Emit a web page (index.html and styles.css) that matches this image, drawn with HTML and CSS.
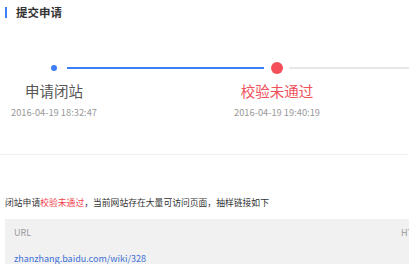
FILE: index.html
```html
<!DOCTYPE html>
<html lang="zh-CN">
<head>
  <meta charset="UTF-8" />
  <meta name="viewport" content="width=device-width, initial-scale=1.0" />
  <title>提交申请</title>
  <link rel="stylesheet" href="styles.css">
</head>
<body>

  <h2 class="section-title">提交申请</h2>

  <div class="progress">
    <div class="track">
      <span class="dot done"></span>
      <span class="line done"></span>
      <span class="dot fail"></span>
      <span class="line"></span>
    </div>
    <div class="labels">
      <div class="step">
        <div class="step-name">申请闭站</div>
        <div class="step-time">2016-04-19 18:32:47</div>
      </div>
      <div class="step fail">
        <div class="step-name">校验未通过</div>
        <div class="step-time">2016-04-19 19:40:19</div>
      </div>
    </div>
  </div>

  <p class="notice">闭站申请<span class="red">校验未通过</span>，当前网站存在大量可访问页面，抽样链接如下</p>

  <table class="links">
    <thead>
      <tr><th>URL</th><th>HTTP状态码</th></tr>
    </thead>
    <tbody>
      <tr><td><a href="#">zhanzhang.baidu.com/wiki/328</a></td><td></td></tr>
    </tbody>
  </table>

</body>
</html>
```

FILE: styles.css
```css
body {
  font-family: "Noto Sans CJK SC", "Noto Sans", sans-serif;
  background-color: #fff;
  margin: 0;
  padding: 0 0 0 5px;
  color: #333;
  overflow: hidden;
}

/* 标题 */
.section-title {
  display: flex;
  align-items: center;
  gap: 9px;
  margin: 0;
  padding-top: 4px;
  height: 16px;
  line-height: 16px;
  font-size: 11.5px;
  font-weight: bold;
  color: #333;
}
.section-title::before {
  content: "";
  width: 2px;
  height: 11px;
  background-color: #3d7ff5;
}

/* 进度 */
.progress {
  margin: 42px 0 0 -5px;
  padding-bottom: 35px;
  border-bottom: 1px solid #f0f0f0;
}

.track {
  display: flex;
  align-items: center;
  height: 12px;
  padding-left: 51px;
}

.dot {
  flex: 0 0 auto;
  width: 6px;
  height: 6px;
  border-radius: 50%;
  background-color: #3d7ff5;
}
.dot.fail {
  width: 12px;
  height: 12px;
  background-color: #f5505a;
}

.line {
  flex: 1;
  height: 2px;
  background-color: #e8e8e8;
  margin-left: 6px;
}
.line.done {
  flex: 0 0 197px;
  background-color: #3d7ff5;
  margin: 0 7px 0 10px;
}

.labels {
  display: flex;
  gap: 115px;
  margin-top: 6px;
}

.step {
  width: 108px;
  text-align: center;
}

.step-name {
  font-size: 14.5px;
  line-height: 22px;
  color: #555;
}
.step.fail .step-name {
  color: #f0505a;
}

.step-time {
  margin-top: 3px;
  font-size: 9.3px;
  line-height: 14px;
  color: #999;
}

/* 说明 */
.notice {
  margin: 41px 0 0;
  font-size: 8.8px;
  line-height: 14px;
  color: #333;
}
.red {
  color: #f0404a;
}

/* 链接表 */
.links {
  margin-top: 9px;
  width: 470px;
  table-layout: fixed;
  border-collapse: collapse;
  background-color: #f1f1f1;
  font-size: 9px;
}
.links th,
.links td {
  height: 26px;
  padding: 0 9px;
  text-align: left;
  font-weight: normal;
  white-space: nowrap;
}
.links th {
  color: #999;
}
.links th:first-child,
.links td:first-child {
  width: 369px;
}
.links a {
  color: #3d70d6;
  text-decoration: none;
}
```
